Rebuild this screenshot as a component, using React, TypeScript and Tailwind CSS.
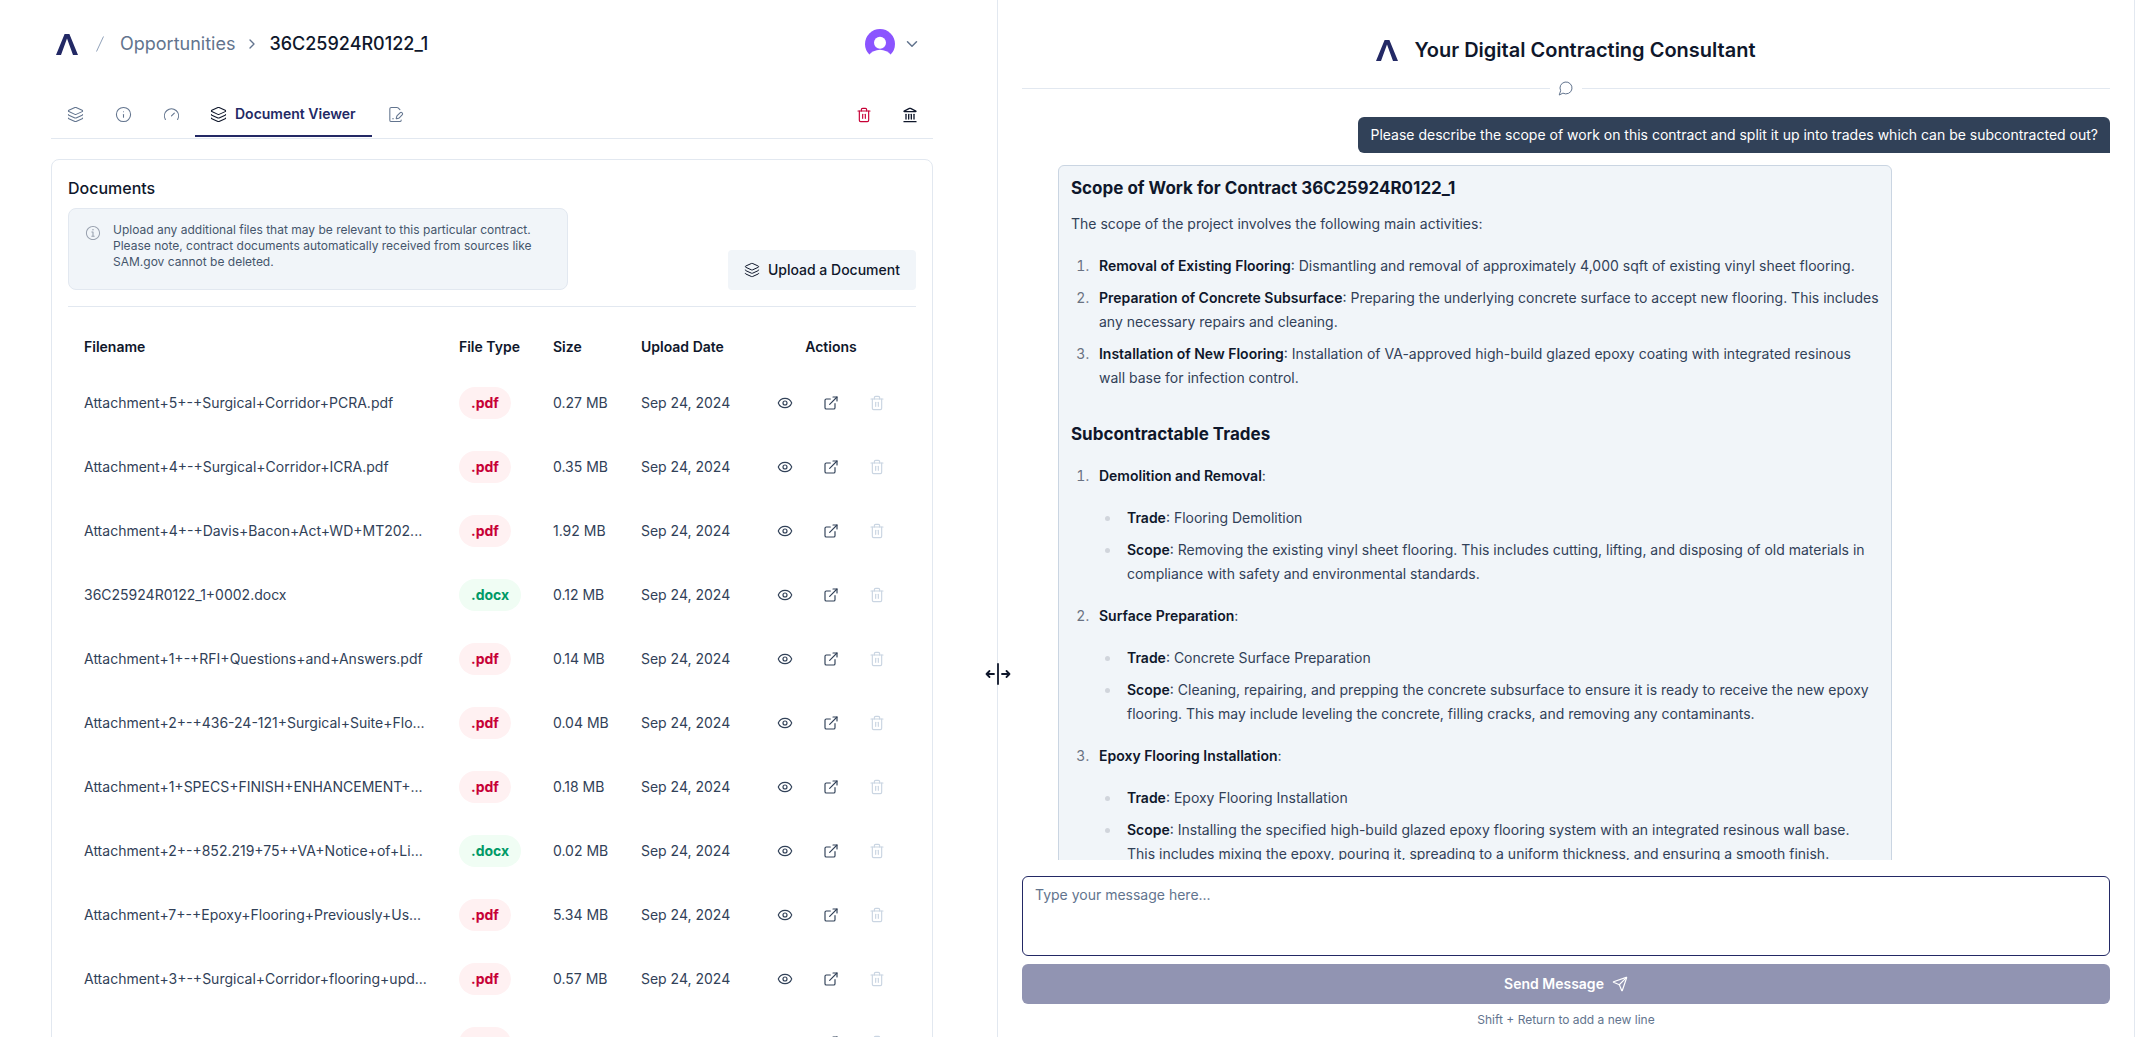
import { ReactNode } from "react";
import {
  ChevronDown,
  ChevronRight,
  ExternalLink,
  Eye,
  FilePenLine,
  Gauge,
  Info,
  Landmark,
  Layers,
  Send,
  Trash2,
} from "lucide-react";
import { RxInfoCircled } from "react-icons/rx";

const documents = [
  { name: "Attachment+5+-+Surgical+Corridor+PCRA.pdf", type: ".pdf", size: "0.27 MB" },
  { name: "Attachment+4+-+Surgical+Corridor+ICRA.pdf", type: ".pdf", size: "0.35 MB" },
  { name: "Attachment+4+-+Davis+Bacon+Act+WD+MT202...", type: ".pdf", size: "1.92 MB" },
  { name: "36C25924R0122_1+0002.docx", type: ".docx", size: "0.12 MB" },
  { name: "Attachment+1+-+RFI+Questions+and+Answers.pdf", type: ".pdf", size: "0.14 MB" },
  { name: "Attachment+2+-+436-24-121+Surgical+Suite+Flo...", type: ".pdf", size: "0.04 MB" },
  { name: "Attachment+1+SPECS+FINISH+ENHANCEMENT+...", type: ".pdf", size: "0.18 MB" },
  { name: "Attachment+2+-+852.219+75++VA+Notice+of+Li...", type: ".docx", size: "0.02 MB" },
  { name: "Attachment+7+-+Epoxy+Flooring+Previously+Us...", type: ".pdf", size: "5.34 MB" },
  { name: "Attachment+3+-+Surgical+Corridor+flooring+upd...", type: ".pdf", size: "0.57 MB" },
  { name: "Attachment+6.pdf", type: ".pdf", size: "0.21 MB" },
];

const activities = [
  {
    title: "Removal of Existing Flooring",
    text: "Dismantling and removal of approximately 4,000 sqft of existing vinyl sheet flooring.",
  },
  {
    title: "Preparation of Concrete Subsurface",
    text: "Preparing the underlying concrete surface to accept new flooring. This includes any necessary repairs and cleaning.",
  },
  {
    title: "Installation of New Flooring",
    text: "Installation of VA-approved high-build glazed epoxy coating with integrated resinous wall base for infection control.",
  },
];

const trades = [
  {
    title: "Demolition and Removal",
    trade: "Flooring Demolition",
    scope:
      "Removing the existing vinyl sheet flooring. This includes cutting, lifting, and disposing of old materials in compliance with safety and environmental standards.",
  },
  {
    title: "Surface Preparation",
    trade: "Concrete Surface Preparation",
    scope:
      "Cleaning, repairing, and prepping the concrete subsurface to ensure it is ready to receive the new epoxy flooring. This may include leveling the concrete, filling cracks, and removing any contaminants.",
  },
  {
    title: "Epoxy Flooring Installation",
    trade: "Epoxy Flooring Installation",
    scope:
      "Installing the specified high-build glazed epoxy flooring system with an integrated resinous wall base. This includes mixing the epoxy, pouring it, spreading to a uniform thickness, and ensuring a smooth finish.",
  },
];

const Logo = () => (
  <svg width="22" height="21" viewBox="0 0 22 21" fill="#232965" aria-hidden="true">
    <path d="M0 21 8.6 0h4.8L22 21h-5L11 4.5 5 21z" />
  </svg>
);

const Avatar = () => (
  <svg width="30" height="30" viewBox="0 0 30 30" aria-hidden="true">
    <circle cx="15" cy="15" r="15" fill="#8b54ff" />
    <circle cx="15" cy="13.7" r="6" fill="#fff" />
    <path d="M4 26C6.5 22.8 10.5 20.7 15 20.7s8.5 2.1 11 5.3V30H4z" fill="#fff" />
  </svg>
);

const ChatIcon = () => (
  <svg
    width="16"
    height="16"
    viewBox="0 0 24 24"
    fill="none"
    stroke="currentColor"
    strokeWidth="1.5"
    strokeLinecap="round"
    strokeLinejoin="round"
    className="text-slate-500"
    aria-hidden="true"
  >
    <path d="M7.9 20A9 9 0 1 0 4 16.1L2 22Z" />
  </svg>
);

const Tab = ({ label, icon, active = false }: { label: string; icon: ReactNode; active?: boolean }) => (
  <button
    type="button"
    role="tab"
    aria-selected={active}
    aria-label={label}
    className={
      active
        ? "flex h-11 items-center gap-2 border-b-2 border-[#232965] pl-[15px] pr-4 text-sm font-semibold text-[#232965]"
        : "flex h-11 w-12 items-center justify-center border-b-2 border-transparent text-slate-500"
    }
  >
    {icon}
    {active && label}
  </button>
);

const Header = () => (
  <header className="flex h-22 items-center justify-between pl-[5px] pr-3">
    <nav className="flex items-center text-lg" aria-label="Breadcrumb">
      <a href="#" aria-label="Home">
        <Logo />
      </a>
      <svg width="8" height="16" viewBox="0 0 8 16" className="ml-[18px] text-slate-400" aria-hidden="true">
        <path d="M.5 15.5 7.5.5" stroke="currentColor" />
      </svg>
      <a href="#" className="ml-4 text-slate-500">
        Opportunities
      </a>
      <ChevronRight size={16} className="mx-[9px] text-slate-500" />
      <span className="font-medium text-slate-900">36C25924R0122_1</span>
    </nav>
    <button type="button" aria-label="Account" className="flex items-center gap-2 text-slate-500">
      <Avatar />
      <ChevronDown size={18} />
    </button>
  </header>
);

const DocumentsTable = () => (
  <table className="w-full table-fixed text-left text-sm text-slate-700">
    <thead>
      <tr className="h-12 text-slate-900">
        <th className="px-4 font-semibold">Filename</th>
        <th className="w-[94px] pl-4 font-semibold">File Type</th>
        <th className="w-[88px] pl-4 font-semibold">Size</th>
        <th className="w-[121px] pl-4 font-semibold">Upload Date</th>
        <th className="w-[170px] text-center font-semibold">Actions</th>
      </tr>
    </thead>
    <tbody>
      {documents.map((doc) => (
        <tr key={doc.name} className="h-16">
          <td className="truncate pl-4">{doc.name}</td>
          <td className="pl-4">
            <span
              className={
                doc.type === ".pdf"
                  ? "inline-flex h-8 items-center rounded-full bg-rose-50 px-3 font-bold text-rose-700"
                  : "inline-flex h-8 items-center rounded-full bg-green-50 px-3 font-bold text-emerald-600"
              }
            >
              {doc.type}
            </span>
          </td>
          <td className="pl-4">{doc.size}</td>
          <td className="pl-4">Sep 24, 2024</td>
          <td>
            <div className="flex justify-center gap-[30px]">
              <button type="button" aria-label="View">
                <Eye size={16} strokeWidth={1.75} />
              </button>
              <button type="button" aria-label="Open">
                <ExternalLink size={16} strokeWidth={1.75} />
              </button>
              <button type="button" aria-label="Delete" disabled className="text-slate-300">
                <Trash2 size={16} strokeWidth={1.75} />
              </button>
            </div>
          </td>
        </tr>
      ))}
    </tbody>
  </table>
);

const DocumentPanel = () => (
  <section className="h-full w-[46.7%] shrink-0 overflow-hidden border-r border-slate-200 pl-[51px] pr-16">
    <Header />
    <div className="flex h-[51px] items-end justify-between border-b border-slate-200 pb-px">
      <div role="tablist" className="flex">
        <Tab label="Overview" icon={<Layers size={17} strokeWidth={1.5} />} />
        <Tab label="Information" icon={<Info size={17} strokeWidth={1.5} />} />
        <Tab label="Score" icon={<Gauge size={17} strokeWidth={1.5} />} />
        <Tab label="Document Viewer" active icon={<Layers size={17} strokeWidth={1.5} className="text-slate-900" />} />
        <Tab label="Proposal" icon={<FilePenLine size={17} strokeWidth={1.5} />} />
      </div>
      <div className="flex h-11 items-center gap-[30px] pr-[15px]">
        <button type="button" aria-label="Delete opportunity" className="text-rose-700">
          <Trash2 size={16} strokeWidth={1.75} />
        </button>
        <button type="button" aria-label="Agency" className="text-slate-900">
          <Landmark size={16} />
        </button>
      </div>
    </div>

    <div className="mt-5 rounded-lg border border-slate-200 p-4">
      <h2 className="mb-2 font-medium text-slate-900">Documents</h2>
      <div className="flex items-end justify-between border-b border-slate-200 pb-4">
        <div className="flex w-[500px] gap-3 rounded-lg border border-slate-200 bg-slate-100 px-4 pb-[19px] pt-[13px]">
          <RxInfoCircled size={16} className="mt-[3px] shrink-0 text-gray-400" />
          <p className="text-xs text-slate-600">
            Upload any additional files that may be relevant to this particular contract. Please note, contract
            documents automatically received from sources like SAM.gov cannot be deleted.
          </p>
        </div>
        <button
          type="button"
          className="flex h-10 items-center gap-2 rounded bg-slate-100 px-4 text-sm font-medium text-slate-900"
        >
          <Layers size={16} strokeWidth={1.5} />
          Upload a Document
        </button>
      </div>
      <div className="pt-4">
        <DocumentsTable />
      </div>
    </div>
  </section>
);

const Strong = ({ children }: { children: ReactNode }) => (
  <strong className="font-semibold text-slate-900">{children}</strong>
);

const Answer = () => (
  <div className="w-4/5 pl-9">
    <div className="rounded-md border border-slate-300 bg-slate-100 px-3 py-2 text-sm leading-6 text-slate-700">
      <h3 className="text-[17px] font-bold leading-7 text-slate-900">Scope of Work for Contract 36C25924R0122_1</h3>
      <p className="mt-2.5">The scope of the project involves the following main activities:</p>
      <ol className="mt-[18px] list-decimal space-y-2 pl-[22px] marker:text-gray-500">
        {activities.map((item) => (
          <li key={item.title} className="pl-1.5">
            <Strong>{item.title}</Strong>: {item.text}
          </li>
        ))}
      </ol>
      <h3 className="mt-[30px] text-[17px] font-bold leading-7 text-slate-900">Subcontractable Trades</h3>
      <ol className="mt-4 list-decimal space-y-[18px] pl-[22px] marker:text-gray-500">
        {trades.map((item) => (
          <li key={item.title} className="pl-1.5">
            <Strong>{item.title}</Strong>:
            <ul className="mt-[18px] list-disc space-y-2 pl-[22px] marker:text-gray-300!">
              <li className="pl-1.5">
                <Strong>Trade</Strong>: {item.trade}
              </li>
              <li className="pl-1.5">
                <Strong>Scope</Strong>: {item.scope}
              </li>
            </ul>
          </li>
        ))}
      </ol>
    </div>
  </div>
);

const ChatPanel = () => (
  <section className="mr-0.5 flex h-full min-w-0 flex-1 flex-col border-r border-slate-200 px-6 pb-[9px] pt-9">
    <div className="flex items-center justify-center gap-4">
      <Logo />
      <h1 className="text-xl font-semibold text-slate-900">Your Digital Contracting Consultant</h1>
    </div>
    <div className="mt-4 flex items-center gap-2">
      <span className="h-px flex-1 bg-slate-200" />
      <ChatIcon />
      <span className="h-px flex-1 bg-slate-200" />
    </div>

    <div className="mt-[21px] flex min-h-0 flex-1 flex-col gap-3 overflow-y-auto [scrollbar-width:none]">
      <p className="self-end rounded-t-md rounded-bl-md bg-slate-700 px-3 py-2 text-sm text-white">
        Please describe the scope of work on this contract and split it up into trades which can be subcontracted out?
      </p>
      <Answer />
    </div>

    <form className="mt-4 flex flex-col gap-2">
      <textarea
        aria-label="Message"
        placeholder="Type your message here..."
        className="h-20 w-full resize-none rounded-md border border-[#232965] px-3 py-2 text-sm outline-none placeholder:text-slate-500"
      />
      <button
        type="button"
        className="flex h-10 items-center justify-center gap-2 rounded-md bg-[#9194b2] text-sm font-semibold text-white"
      >
        Send Message
        <Send size={16} strokeWidth={1.75} />
      </button>
      <p className="text-center text-xs text-slate-500">Shift + Return to add a new line</p>
    </form>
  </section>
);

const ResizeHandle = () => (
  <div className="relative z-10 w-0">
    <button
      type="button"
      aria-label="Resize panels"
      className="absolute -left-[13px] top-[65%] -translate-y-1/2 text-slate-900"
    >
      <svg
        width="26"
        height="22"
        viewBox="0 0 26 22"
        fill="none"
        stroke="currentColor"
        strokeWidth="1.8"
        strokeLinecap="round"
        strokeLinejoin="round"
      >
        <path d="M13 1v20" />
        <path d="M9 11H1.5M4.5 8l-3 3 3 3" />
        <path d="M17 11h7.5M21.5 8l3 3-3 3" />
      </svg>
    </button>
  </div>
);

export default function App() {
  return (
    <main className="flex h-screen overflow-hidden bg-white font-[Inter,sans-serif]">
      <DocumentPanel />
      <ResizeHandle />
      <ChatPanel />
    </main>
  );
}
